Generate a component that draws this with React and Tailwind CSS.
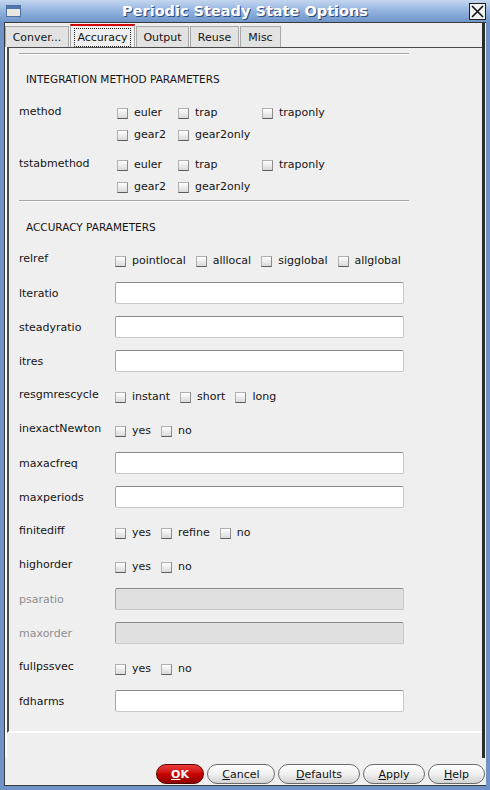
const Box = () => (
  <span className="inline-block h-[11px] w-[11px] shrink-0 border border-[#b0b0b0] border-b-[#5c5c5c] border-r-[#8c8c8c] bg-linear-to-b from-white to-[#d9d9d9]" />
);

const Opt = ({ label, w = "" }) => (
  <div className={`flex items-center gap-[6px] ${w}`}>
    <Box />
    <span>{label}</span>
  </div>
);

const Field = ({ disabled }) => (
  <div
    className={`h-[22px] w-[289px] rounded-[2px] border border-[#c8c8c8] border-t-[#8a8a8a] border-l-[#a8a8a8] ${
      disabled ? "bg-[#e0e0e0]" : "bg-white"
    }`}
  />
);

const Row = ({ label, disabled, children }) => (
  <div className="flex h-[34px] items-center">
    <div className={`mt-[2px] w-[96px] ${disabled ? "text-[#8e8e8e]" : ""}`}>{label}</div>
    {children}
  </div>
);

const CheckRow = ({ label, options }) => (
  <div className="flex h-[34px] items-center">
    <div className="w-[96px]">{label}</div>
    <div className="mt-[4px] flex items-center gap-[10px]">
      {options.map((o) => (
        <Opt key={o} label={o} />
      ))}
    </div>
  </div>
);

const MethodGroup = ({ label }) => (
  <div>
    <div className="flex h-[22px] items-center">
      <div className="-mt-[2px] w-[98px]">{label}</div>
      <Opt label="euler" w="w-[61px]" />
      <Opt label="trap" w="w-[84px]" />
      <Opt label="traponly" />
    </div>
    <div className="flex h-[22px] items-center">
      <div className="w-[98px]" />
      <Opt label="gear2" w="w-[61px]" />
      <Opt label="gear2only" />
    </div>
  </div>
);

const Separator = () => <div className="w-[390px] border-t border-b border-t-[#a4a4a4] border-b-white" />;

const tabs = [
  { name: "Conver...", w: "w-[64px]" },
  { name: "Accuracy", w: "w-[65px]", active: true },
  { name: "Output", w: "w-[53px]" },
  { name: "Reuse", w: "w-[49px]" },
  { name: "Misc", w: "w-[41px]" },
];

const Btn = ({ first, rest, w }) => (
  <button
    className={`h-[20px] ${w} rounded-full border border-[#6a6a6a] bg-linear-to-b from-white via-[#f0f0f0] to-[#d2d2d2] pt-[2px] text-[11px] text-[#111]`}
  >
    <span className="underline">{first}</span>
    {rest}
  </button>
);

export default function App() {
  return (
    <div className="h-[790px] w-[490px] bg-[#6f93c7] px-[4px] pb-[4px] font-['DejaVu_Sans',sans-serif] text-[11px] text-[#141414]">
      {/* title bar */}
      <div className="-mx-[4px] grid h-[22px] grid-cols-[1fr_auto_1fr] items-center bg-linear-to-b from-[#c3d6ef] via-[#93b3de] to-[#6f95ca] px-[6px]">
        <div className="flex">
          <div className="h-[12px] w-[15px] border border-[#4c6f9f] bg-linear-to-b from-[#4f78b0] from-25% to-[#e8e8e0] to-25%" />
        </div>
        <div className="pt-[1px] text-[14.5px] font-bold text-white [text-shadow:1px_1px_0_#284a7c]">
          Periodic Steady State Options
        </div>
        <div className="flex justify-end -mr-[2px]">
          <div className="flex h-[17px] w-[17px] items-center justify-center border border-[#1e1e1e] bg-[#f2f2f2]">
            <svg width="13" height="13" viewBox="0 0 13 13">
              <path d="M1 1 L12 12 M12 1 L1 12" stroke="#111" strokeWidth="1.6" />
            </svg>
          </div>
        </div>
      </div>

      {/* body */}
      <div className="flex h-[764px] flex-col border-t border-l border-b border-[#3a3a3a] bg-[#efefef]">
        <div className="mr-[1px] flex flex-col border-r-[3px] border-r-[#2c2c2c]">
          {/* tabs */}
          <div className="flex h-[24px] items-end gap-[1px]">
            {tabs.map((t) =>
              t.active ? (
                <div
                  key={t.name}
                  className={`${t.w} flex h-[23px] items-end justify-center border-x border-x-[#a8a8a8] border-t-2 border-t-[#d20000] bg-[#efefef] px-[3px]`}
                >
                  <span className="flex h-[19px] w-full items-center justify-center border border-dotted border-[#222] pt-[2px]">
                    {t.name}
                  </span>
                </div>
              ) : (
                <div
                  key={t.name}
                  className={`${t.w} flex h-[21px] items-center justify-center border border-b-0 border-[#a8a8a8] bg-[#e2e2e2] pt-[3px]`}
                >
                  {t.name}
                </div>
              )
            )}
          </div>

          {/* panel */}
          <div className="border-l-2 border-l-[#fafafa]">
            <div className="h-[686px] border-t border-l-2 border-b-2 border-t-[#4a4a4a] border-l-[#4a4a4a] border-b-white pl-[10px] pt-[5px]">
              <Separator />
              <div className="mt-[12px] flex h-[26px] items-center pl-[7px] text-[10.5px]">
                INTEGRATION METHOD PARAMETERS
              </div>
              <div className="mt-[9px] flex flex-col gap-[8px]">
                <MethodGroup label="method" />
                <MethodGroup label="tstabmethod" />
              </div>
              <div className="mt-[2px]">
                <Separator />
              </div>
              <div className="mt-[13px] flex h-[26px] items-center pl-[7px] text-[10.5px]">ACCURACY PARAMETERS</div>
              <div className="mt-[1px]">
                <CheckRow label="relref" options={["pointlocal", "alllocal", "sigglobal", "allglobal"]} />
                <Row label="lteratio">
                  <Field />
                </Row>
                <Row label="steadyratio">
                  <Field />
                </Row>
                <Row label="itres">
                  <Field />
                </Row>
                <CheckRow label="resgmrescycle" options={["instant", "short", "long"]} />
                <CheckRow label="inexactNewton" options={["yes", "no"]} />
                <Row label="maxacfreq">
                  <Field />
                </Row>
                <Row label="maxperiods">
                  <Field />
                </Row>
                <CheckRow label="finitediff" options={["yes", "refine", "no"]} />
                <CheckRow label="highorder" options={["yes", "no"]} />
                <Row label="psaratio" disabled>
                  <Field disabled />
                </Row>
                <Row label="maxorder" disabled>
                  <Field disabled />
                </Row>
                <CheckRow label="fullpssvec" options={["yes", "no"]} />
                <Row label="fdharms">
                  <Field />
                </Row>
              </div>
            </div>
            <div className="h-[25px]" />
          </div>
        </div>

        {/* buttons */}
        <div className="mt-[6px] flex justify-end gap-[3px] pr-[1px]">
          <button className="h-[20px] w-[48px] rounded-full border border-[#5a0000] bg-linear-to-b from-[#ec3a3a] via-[#c80000] to-[#8e0000] pt-[2px] text-[11px] font-bold text-white">
            <span className="underline">O</span>K
          </button>
          <Btn first="C" rest="ancel" w="w-[68px]" />
          <Btn first="D" rest="efaults" w="w-[82px]" />
          <Btn first="A" rest="pply" w="w-[62px]" />
          <Btn first="H" rest="elp" w="w-[57px]" />
        </div>
      </div>
    </div>
  );
}
